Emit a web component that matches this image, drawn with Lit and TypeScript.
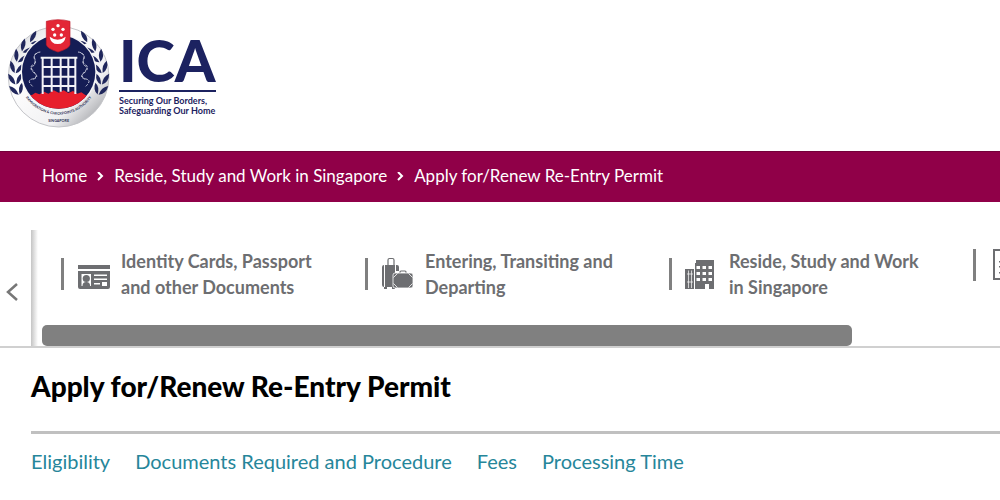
import { LitElement, html, css, svg } from "lit";
import { customElement, property } from "lit/decorators.js";

type IconName = "card" | "luggage" | "building" | "form";

const icons = {
  card: svg`
    <path d="M0 8h32v4H0z"/>
    <path fill-rule="evenodd" d="M0 14h32v16q0 2-2 2H2q-2 0-2-2zM3.500 17v12H13V17zM16 17.500v1.500h13v-1.500zM16 21.500V23h13v-1.500zM16 26v1.500h6V26zM24 25v4h5v-4z"/>
    <circle cx="8.300" cy="21.500" r="3.600"/><path d="M4.500 29q0-4 3.800-4t3.800 4z"/>`,
  luggage: svg`
    <path fill="none" stroke="currentColor" stroke-width="1.200" d="M6 8V3q0-1.500 1.500-1.500h3Q12 1.500 12 3v5"/>
    <path d="M0 10q0-2 2-2v22q-2 0-2-2zM3 8h10v22H3zM14 8h1q2 0 2 2v4h-3zM2 30h3v2H2zM10 30h3v2h-3z"/>
    <path fill="none" stroke="currentColor" stroke-width="1.200" d="M18 16.500V15q0-1 1-1h4q1 0 1 1v1.500"/>
    <path stroke="#fff" stroke-width=".8" d="M13 16h16q2 0 2 2v11q0 2-2 2H13q-2 0-2-2V18q0-2 2-2z"/>
    <path fill="none" stroke="#fff" stroke-width=".8" d="M11.500 20.500l4-4M11.500 26.500l4 4M30.500 20.500l-4-4M30.500 26.500l-4 4"/>`,
  building: svg`
    <path fill-rule="evenodd" d="M10 3h18v29h-5v-5h-4v5H9V6h1zM10.500 9v3H14V9zM16.500 9v3H20V9zM22.500 9v3H26V9zM10.500 15v3H14v-3zM16.500 15v3H20v-3zM22.500 15v3H26v-3zM10.500 21v3H14v-3zM16.500 21v3H20v-3zM22.500 21v3H26v-3z"/>
    <path d="M-1 12h9v20h-9z"/>
    <path fill="none" stroke="#fff" stroke-width=".7" d="M2.500 13.500V31M5.500 13.500V31M1 17h6M1 25h6"/>`,
  form: svg`
    <path fill="none" stroke="currentColor" stroke-width="2" d="M4 2h22v29H4z"/>
    <path d="M9 13h12v1.500H9zM9 18h12v1.500H9zM9 24h12v1.500H9z"/>`,
};

@customElement("ica-emblem")
class IcaEmblem extends LitElement {
  static styles = css`
    :host { display: block; }
    svg { display: block; }
    .ring-text { font: 700 11px Lato, sans-serif; fill: #2c2f52; }
  `;
  private leaves() {
    const steps = [-58, -42, -27, -12, 3, 17];
    return [1, -1].map((side) =>
      steps.map((deg) => {
        const a = (deg * Math.PI) / 180;
        const x = 176 - side * 130 * Math.cos(a);
        const y = 198 + 130 * Math.sin(a);
        return svg`<g transform=${`translate(${x} ${y}) scale(${side} 1) rotate(${-deg})`}>
          <path d="M-1 19Q-22 10-21-15Q-2-6-1 19z"/><path d="M2 19Q20 11 19-13Q3-6 2 19z"/>
        </g>`;
      })
    );
  }
  render() {
    return html`<svg width="110" height="125" viewBox="0 0 330 375" role="img" aria-label="ICA emblem">
      <defs>
        <linearGradient id="silver" x1="0" y1="0" x2="1" y2="1">
          <stop offset="0" stop-color="#c9cbd0"/><stop offset=".3" stop-color="#fff"/>
          <stop offset=".7" stop-color="#f1f1f3"/><stop offset="1" stop-color="#85878c"/>
        </linearGradient>
        <path id="arc" d="M56 194A120 120 0 0 0 296 194"/>
        <clipPath id="disc"><circle cx="176" cy="186" r="110"/></clipPath>
      </defs>
      <circle cx="176" cy="200" r="151" fill="url(#silver)" stroke="#c4c5c9" stroke-width="3"/>
      <g fill="#20275c">${this.leaves()}</g>
      <circle cx="176" cy="186" r="114" fill="#f5f5f7"/>
      <circle cx="176" cy="186" r="110" fill="#151d55"/>
      <path clip-path="url(#disc)" fill="#e71e2c" d="M65 268q15-15 31-13l10-7 12 5 14-8 13 6 16-10 15 7 15-7 14 8 14-6 13 8 12-4 13 9q15-2 28 13v40H65z"/>
      <path fill="none" stroke="#f3f4f8" stroke-width="6" d="M122 143h110M128 171h97M128 200h97M128 228h97M128 140v112M155 140v105M182 140v105M205 140v105M226 140v112"/>
      <path fill="none" stroke="#c3c6d8" stroke-width="3" stroke-dasharray="9 4" d="M121 126q-22 3-17 19t-6 20 4 21-5 21 4 25M234 126q22 3 17 19t6 20-4 21 5 21-4 25M112 129q-14 7-8 20t-6 20 5 20-5 19M243 129q14 7 8 20t6 20-5 20 5 19"/>
      <path fill="#e32636" stroke="#bd1828" stroke-width="2" d="M139 34q35-10 71 0v69q0 12-36 23-35-11-35-23z"/>
      <path fill="#fff" d="M149 80q24 18 48 0-3 22-24 22t-24-22z"/>
      <g fill="#fff"><circle cx="174" cy="47" r="5"/><circle cx="159" cy="58" r="5"/><circle cx="189" cy="58" r="5"/><circle cx="164" cy="75" r="5"/><circle cx="184" cy="75" r="5"/></g>
      <text class="ring-text" text-anchor="middle"><textPath href="#arc" startOffset="50%">IMMIGRATION &amp; CHECKPOINTS AUTHORITY</textPath></text>
      <text class="ring-text" text-anchor="middle" x="176" y="336">SINGAPORE</text>
    </svg>`;
  }
}

@customElement("service-item")
class ServiceItem extends LitElement {
  @property() icon: IconName = "card";
  @property() label = "";
  static styles = css`
    :host { display: block; flex: 0 0 304px; color: #6d6e71; }
    a { display: flex; align-items: center; min-height: 34px; color: inherit; text-decoration: none; }
    .rule { width: 3px; height: 32px; background: #808080; margin-right: 14px; flex: none; }
    svg { display: block; flex: none; fill: currentColor; overflow: visible; }
    .text { margin-left: 11px; width: 208px; font-size: 18px; line-height: 26px; font-weight: 700; }
  `;
  render() {
    return html`<a href="#" aria-label=${this.label || "More services"}>
      <span class="rule"></span>
      <svg width="32" height="34" viewBox="0 0 32 34" aria-hidden="true">${icons[this.icon]}</svg>
      ${this.label ? html`<span class="text">${this.label}</span>` : null}
    </a>`;
  }
}

@customElement("app-root")
class AppRoot extends LitElement {
  static styles = css`
    :host { display: block; min-height: 100vh; background: #fff; overflow: hidden; font-family: Lato, "Open Sans", sans-serif; }
    a { text-decoration: none; color: inherit; }
    .brand { display: flex; gap: 9px; padding: 10px 0 16px; }
    .wordmark { padding-top: 20px; color: #1c2260; }
    .name { font-size: 58px; line-height: 60px; font-weight: 900; border-bottom: 2px solid #1c2260; }
    .motto { font-size: 9px; line-height: 10px; font-weight: 700; margin-top: 4px; }
    .crumbs { display: flex; align-items: center; gap: 10px; height: 51px; padding-left: 42px; background: #900048; border-top: 1px solid #74003a; box-sizing: border-box; color: #fff; font-size: 17px; line-height: 22px; white-space: nowrap; }
    .crumbs a { padding-bottom: 2px; }
    .services { display: flex; margin-top: 28px; border-bottom: 2px solid #d0d0d0; }
    .prev { width: 31px; padding: 10px 0 0 5px; border: 0; background: none; color: #777; text-align: left; }
    .viewport { flex: 1; min-width: 0; overflow: hidden; background: linear-gradient(to right, #c4c4c4, #fff 7px); }
    .track { display: flex; align-items: flex-start; padding: 18px 0 25px 30px; }
    .thumb { width: 83.6%; height: 21px; margin-left: 11px; border-radius: 5px; background: #808080; }
    main { padding: 21px 0 0 31px; }
    h1 { margin: 0; padding-bottom: 28px; border-bottom: 3px solid #c0c0c0; font-size: 28px; line-height: 34px; font-weight: 900; color: #000; }
    .tabs { display: flex; gap: 25px; padding-top: 13px; font-size: 20px; line-height: 28px; color: #26869a; white-space: nowrap; }
  `;
  render() {
    const chevron = html`<svg width="7" height="10" viewBox="0 0 7 10" aria-hidden="true"><path d="M1 0l4 4L1 8" fill="none" stroke="#fff" stroke-width="2"/></svg>`;
    return html`
      <header class="brand">
        <ica-emblem></ica-emblem>
        <div class="wordmark">
          <div class="name">ICA</div>
          <div class="motto">Securing Our Borders,<br>Safeguarding Our Home</div>
        </div>
      </header>
      <nav class="crumbs" aria-label="Breadcrumb">
        <a href="#">Home</a>${chevron}<a href="#">Reside, Study and Work in Singapore</a>${chevron}<a href="#">Apply for/Renew Re-Entry Permit</a>
      </nav>
      <section class="services">
        <button class="prev" aria-label="Previous">
          <svg width="14" height="20" viewBox="0 0 14 20"><path d="M12 2L3 10l9 8" fill="none" stroke="currentColor" stroke-width="2.500"/></svg>
        </button>
        <div class="viewport">
          <div class="track">
            <service-item icon="card" label="Identity Cards, Passport and other Documents"></service-item>
            <service-item icon="luggage" label="Entering, Transiting and Departing"></service-item>
            <service-item icon="building" label="Reside, Study and Work in Singapore"></service-item>
            <service-item icon="form"></service-item>
          </div>
          <div class="thumb"></div>
        </div>
      </section>
      <main>
        <h1>Apply for/Renew Re-Entry Permit</h1>
        <nav class="tabs" aria-label="Sections">
          <a href="#">Eligibility</a><a href="#">Documents Required and Procedure</a><a href="#">Fees</a><a href="#">Processing Time</a>
        </nav>
      </main>
    `;
  }
}
